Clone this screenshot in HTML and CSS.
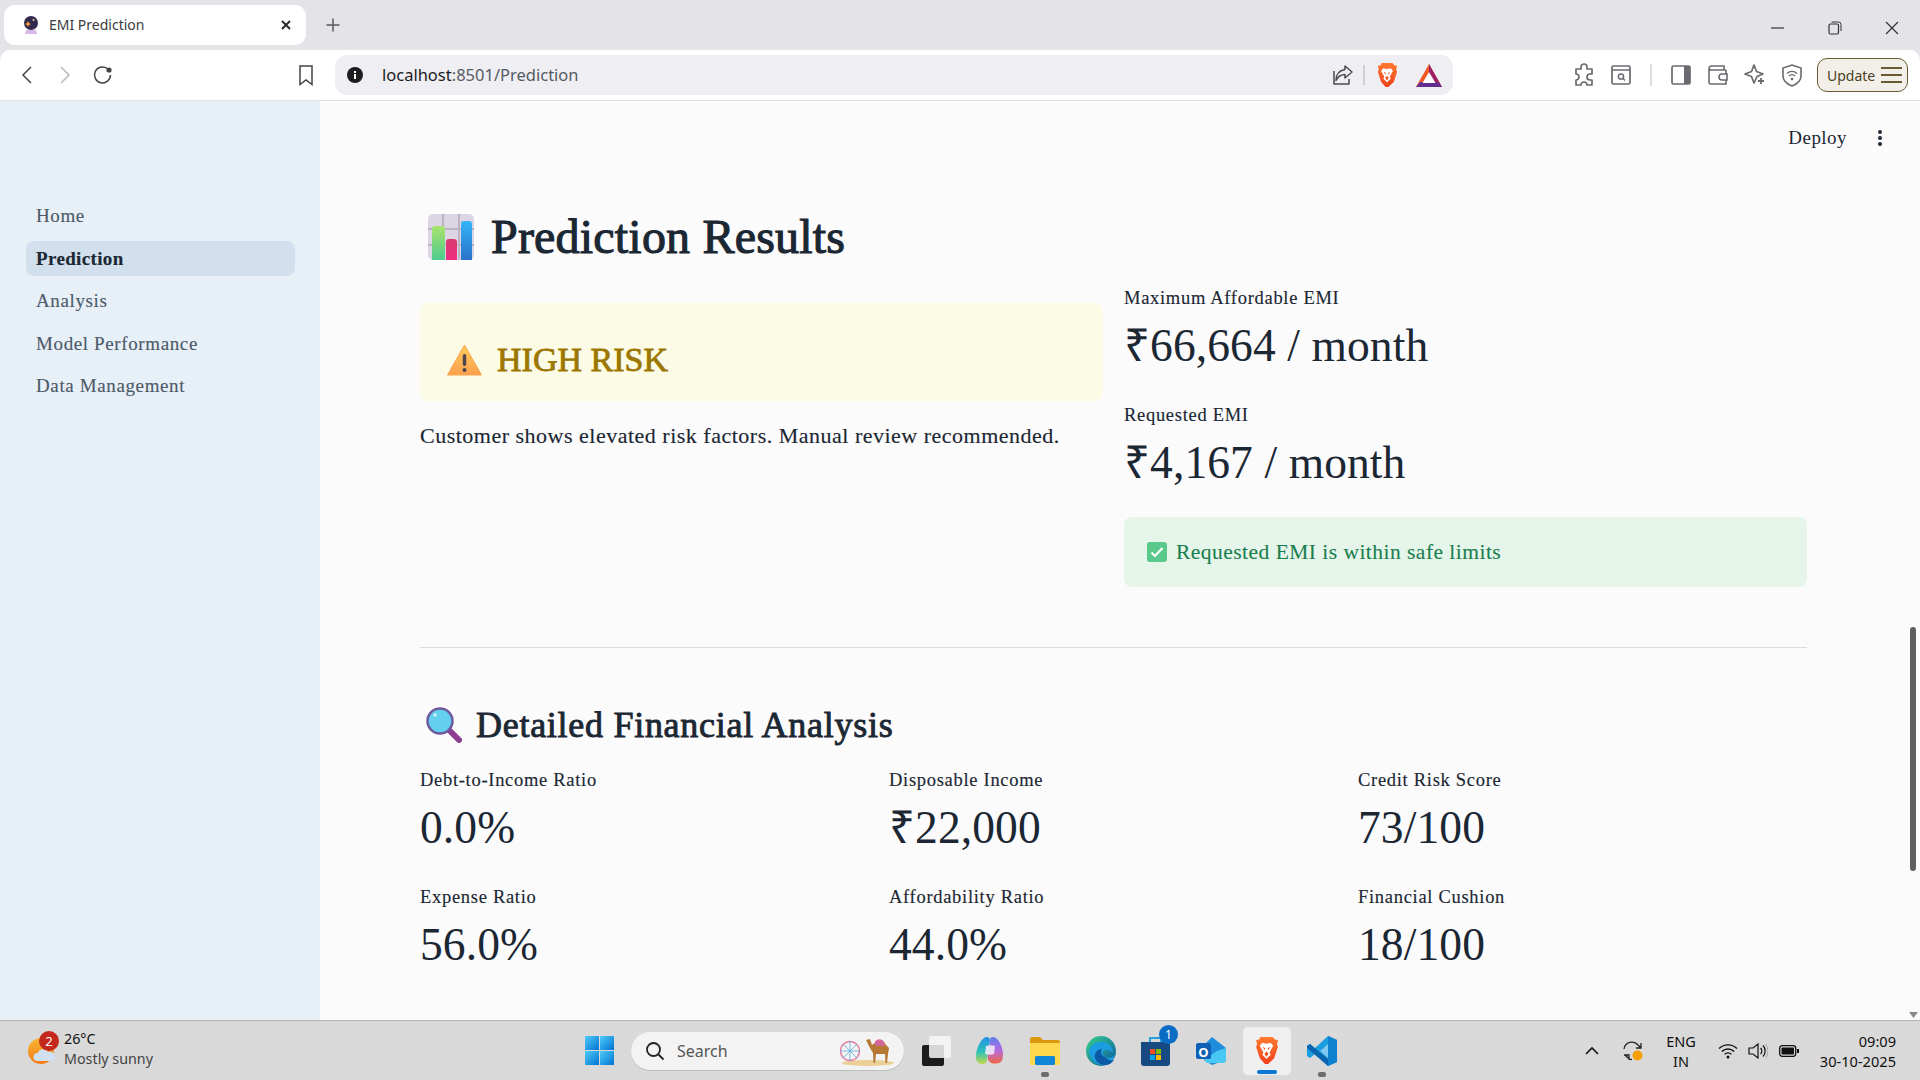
FILE: index.html
```html
<!DOCTYPE html>
<html lang="en">
<head>
<meta charset="utf-8">
<title>EMI Prediction</title>
<link rel="stylesheet" href="styles.css">
</head>
<body>
<svg class="defs" width="0" height="0" aria-hidden="true">
  <defs>
    <linearGradient id="bravegrad" x1="0" y1="0" x2="0" y2="1"><stop offset="0" stop-color="#ff7a2f"/><stop offset="1" stop-color="#f0421c"/></linearGradient>
    <linearGradient id="winblue" x1="0" y1="0" x2="1" y2="1"><stop offset="0" stop-color="#4fcbfb"/><stop offset="1" stop-color="#0272cf"/></linearGradient>
    <linearGradient id="barg" x1="0" y1="0" x2="0" y2="1"><stop offset="0" stop-color="#a8e36a"/><stop offset="1" stop-color="#4ecb8f"/></linearGradient>
    <linearGradient id="barp" x1="0" y1="0" x2="0" y2="1"><stop offset="0" stop-color="#d93a6e"/><stop offset="1" stop-color="#f02d80"/></linearGradient>
    <linearGradient id="barb" x1="0" y1="0" x2="0" y2="1"><stop offset="0" stop-color="#34b4fa"/><stop offset="1" stop-color="#2a72c8"/></linearGradient>
    <linearGradient id="warn" x1="0" y1="0" x2="0" y2="1"><stop offset="0" stop-color="#ffcf5c"/><stop offset="1" stop-color="#fb9f4e"/></linearGradient>
    <linearGradient id="sunny" x1="0" y1="0" x2="0" y2="1"><stop offset="0" stop-color="#f7b733"/><stop offset="1" stop-color="#f47a14"/></linearGradient>
    <linearGradient id="copil" x1="0" y1="0" x2="0" y2="1"><stop offset="0" stop-color="#1f8fe8"/><stop offset=".55" stop-color="#2fc4b8"/><stop offset="1" stop-color="#c5d94a"/></linearGradient>
    <linearGradient id="copir" x1="0" y1="0" x2="0" y2="1"><stop offset="0" stop-color="#5a7df0"/><stop offset=".5" stop-color="#b56ae0"/><stop offset="1" stop-color="#f0683f"/></linearGradient>
    <linearGradient id="edgeg" x1="0" y1="0" x2="1" y2="1"><stop offset="0" stop-color="#37d08a"/><stop offset="1" stop-color="#0c59a4"/></linearGradient>
    <symbol id="brave" viewBox="0 0 24 28">
      <path d="M6 1h12l2 2.4 3 .6-1 4 1 2.500-3.600 11L13.500 27h-3l-4.900-5.500L2 10.500 3 8 2 4l3-.6z" fill="url(#bravegrad)"/>
      <path d="M8 6.500l4 1 4-1 2.500 3-2 3.500-1.500 3 1 2-4 4-4-4 1-2-1.500-3-2-3.500z" fill="#fff"/>
      <path d="M8.500 10.500l2.500 1.500-1 1.500zM15.500 10.500L13 12l1 1.500zM12 15l-2 2 2 3 2-3z" fill="#f0521f"/>
    </symbol>
  </defs>
</svg>

<header class="tabstrip">
  <div class="tab">
    <svg class="favicon" width="16" height="18" viewBox="0 0 16 18"><circle cx="8" cy="7" r="7" fill="#33294f"/><path d="M3 14h10l1 4H2z" fill="#d6b8ea"/><path d="M5 5l1 2 2 1-2 1-1 2-1-2-2-1 2-1z" fill="#f2a33a"/><circle cx="10.500" cy="4" r="1" fill="#f5d9a6"/></svg>
    <span class="tab-title">EMI Prediction</span>
    <svg class="tab-close" width="12" height="12" viewBox="0 0 12 12"><path d="M2 2l8 8M10 2l-8 8" stroke="#2b2b2f" stroke-width="2"/></svg>
  </div>
  <svg class="newtab" width="16" height="16" viewBox="0 0 16 16"><path d="M8 1.500v13M1.500 8h13" stroke="#5b5b60" stroke-width="1.500"/></svg>
  <div class="winctl">
    <span class="winbtn"><svg width="14" height="14" viewBox="0 0 14 14"><path d="M0 7h13" stroke="#333" stroke-width="1.200"/></svg></span>
    <span class="winbtn"><svg width="14" height="14" viewBox="0 0 14 14"><rect x="1" y="3" width="9.500" height="10" rx="1.500" fill="none" stroke="#333" stroke-width="1.200"/><path d="M3.500 1h7a2.500 2.500 0 0 1 2.500 2.500V10" fill="none" stroke="#333" stroke-width="1"/></svg></span>
    <span class="winbtn"><svg width="14" height="14" viewBox="0 0 14 14"><path d="M1 1l12 12M13 1L1 13" stroke="#333" stroke-width="1.200"/></svg></span>
  </div>
</header>

<nav class="toolbar">
  <div class="tb-left">
    <span class="navbtn"><svg width="14" height="20" viewBox="0 0 14 20"><path d="M11 2L3 10l8 8" fill="none" stroke="#444" stroke-width="1.500"/></svg></span>
    <span class="navbtn"><svg width="14" height="20" viewBox="0 0 14 20"><path d="M3 2l8 8-8 8" fill="none" stroke="#b9b9bd" stroke-width="1.500"/></svg></span>
    <span class="navbtn"><svg width="22" height="22" viewBox="0 0 22 22"><path d="M18.500 11A8 8 0 1 1 15 4.300" fill="none" stroke="#444" stroke-width="1.500"/><circle cx="17" cy="6" r="2.600" fill="#444"/></svg></span>
    <span class="bookmark"><svg width="16" height="21" viewBox="0 0 16 21"><path d="M2 1h12v18.500l-6-4.500-6 4.500z" fill="none" stroke="#444" stroke-width="1.500"/></svg></span>
  </div>
  <div class="addr">
    <svg class="info" width="16" height="16" viewBox="0 0 16 16"><circle cx="8" cy="8" r="8" fill="#1d1d20"/><rect x="7" y="7" width="2" height="5" fill="#fff"/><rect x="7" y="4" width="2" height="2" fill="#fff"/></svg>
    <span class="url"><span class="url-host">localhost</span>:8501/Prediction</span>
    <span class="addr-right">
      <svg width="22" height="22" viewBox="0 0 22 22"><path d="M13 2l7 6-7 6v-3.500c-4 0-7 2-9 6 0-6 3-10 9-11zM2 7v13h15v-5" fill="none" stroke="#4c4c50" stroke-width="1.500" stroke-linejoin="round"/></svg>
      <span class="addr-sep"></span>
      <svg class="brave-small" width="22" height="26"><use href="#brave"/></svg>
      <svg class="bat" width="26" height="23" viewBox="0 0 26 23"><path d="M13 0l13 23H0z" fill="#f15a22"/><path d="M13 0l13 23h-7l-6-11z" fill="#9e1f63"/><path d="M0 23h26l-4-5H4z" fill="#662d91"/><path d="M13 8l6.500 11h-13z" fill="#fff"/></svg>
    </span>
  </div>
  <div class="tb-right">
    <span class="tool"><svg width="22" height="24" viewBox="0 0 22 24"><path d="M8 4a3 3 0 0 1 6 0v2h5v5h-2a3 3 0 0 0 0 6h2v5h-5a3 3 0 0 0-6 0H3v-5a3 3 0 0 0 0-6V6h5z" fill="none" stroke="#6a6a70" stroke-width="1.700" stroke-linejoin="round"/></svg></span>
    <span class="tool"><svg width="20" height="20" viewBox="0 0 20 20"><rect x="1" y="1" width="18" height="18" rx="1.500" fill="none" stroke="#6a6a70" stroke-width="1.700"/><path d="M1 5h18" stroke="#6a6a70" stroke-width="1.500"/><circle cx="10" cy="11.500" r="2.600" fill="none" stroke="#6a6a70" stroke-width="1.500"/><path d="M12 13.500l2 2" stroke="#6a6a70" stroke-width="1.500"/></svg></span>
    <span class="tool-sep"><span class="tool-rule"></span></span>
    <span class="tool"><svg width="20" height="20" viewBox="0 0 20 20"><rect x="1" y="1" width="18" height="18" rx="1.500" fill="none" stroke="#6a6a70" stroke-width="1.700"/><rect x="13" y="1" width="6" height="18" fill="#6a6a70"/></svg></span>
    <span class="tool"><svg width="20" height="20" viewBox="0 0 20 20"><path d="M18 5H3.500A2.500 2.500 0 0 1 1 3.500 2.500 2.500 0 0 1 3.500 1H16v4M1 3.500V17a2 2 0 0 0 2 2h15V5" fill="none" stroke="#6a6a70" stroke-width="1.600"/><path d="M19 9h-5a2.500 2.500 0 0 0 0 6h5z" fill="#fff" stroke="#6a6a70" stroke-width="1.600"/></svg></span>
    <span class="tool"><svg width="22" height="24" viewBox="0 0 22 24"><path d="M10 2l2.500 6.500L19 11l-6 2.500L10 20l-2.500-6.500L1 11l6.500-2.500z" fill="none" stroke="#6a6a70" stroke-width="1.700" stroke-linejoin="round"/><path d="M17 15v6M14 18h6" stroke="#6a6a70" stroke-width="1.800"/></svg></span>
    <span class="tool"><svg width="20" height="23" viewBox="0 0 20 23"><path d="M10 1l9 3v8c0 5-4 8-9 10-5-2-9-5-9-10V4z" fill="none" stroke="#6a6a70" stroke-width="1.600"/><path d="M5 9.500a7 7 0 0 1 10 0M7 12a4 4 0 0 1 6 0" fill="none" stroke="#6a6a70" stroke-width="1.400"/><circle cx="10" cy="15" r="1.300" fill="#6a6a70"/></svg></span>
    <span class="update"><span class="update-text">Update</span><span class="burger"><i></i><i></i><i></i></span></span>
  </div>
</nav>

<div class="page">
  <aside class="sidebar">
    <a class="nav-item">Home</a>
    <a class="nav-item active">Prediction</a>
    <a class="nav-item">Analysis</a>
    <a class="nav-item">Model Performance</a>
    <a class="nav-item">Data Management</a>
  </aside>

  <main class="main">
    <div class="deploy">
      <span class="deploy-text">Deploy</span>
      <svg width="4" height="16" viewBox="0 0 4 16"><circle cx="2" cy="2" r="2" fill="#1f2937"/><circle cx="2" cy="8" r="2" fill="#1f2937"/><circle cx="2" cy="14" r="2" fill="#1f2937"/></svg>
    </div>

    <h1 class="title">
      <svg class="title-emoji" width="46" height="46" viewBox="0 0 46 46"><rect width="46" height="46" rx="5" fill="#dcd6e4"/><path d="M15 0v46M31 0v46M0 15h46M0 31h46" stroke="#b9b3c3" stroke-width="2"/><path d="M4 15a3 3 0 0 1 3-3h7a3 3 0 0 1 3 3v31H4z" fill="url(#barg)"/><path d="M18 28a3 3 0 0 1 3-3h5a3 3 0 0 1 3 3v18H18z" fill="url(#barp)"/><path d="M33 10a3 3 0 0 1 3-3h5a3 3 0 0 1 3 3v36H33z" fill="url(#barb)"/></svg>
      <span>Prediction Results</span>
    </h1>

    <section class="results">
      <div class="risk-col">
        <div class="risk-box">
          <svg width="35" height="32" viewBox="0 0 35 32"><path d="M17.500 1L34.500 31H.5z" fill="url(#warn)" stroke="#f9a24f" stroke-linejoin="round"/><rect x="15.800" y="10" width="3.400" height="12" rx="1.700" fill="#4b4650"/><circle cx="17.500" cy="26" r="2" fill="#4b4650"/></svg>
          <span class="risk-text">HIGH RISK</span>
        </div>
        <p class="risk-note">Customer shows elevated risk factors. Manual review recommended.</p>
      </div>
      <div class="emi-col">
        <div class="metric"><div class="metric-label">Maximum Affordable EMI</div><div class="metric-value">₹66,664 / month</div></div>
        <div class="metric"><div class="metric-label">Requested EMI</div><div class="metric-value">₹4,167 / month</div></div>
        <div class="ok-box">
          <svg width="20" height="20" viewBox="0 0 20 20"><rect width="20" height="20" rx="3" fill="#58c98a"/><path d="M4.500 10.500l3.500 3.500 7.500-8" fill="none" stroke="#fff" stroke-width="2.200"/></svg>
          <span>Requested EMI is within safe limits</span>
        </div>
      </div>
    </section>

    <hr class="rule">

    <h2 class="subtitle">
      <svg width="36" height="36" viewBox="0 0 36 36"><path d="M23 23l10 10" stroke="#8c3f90" stroke-width="6" stroke-linecap="round"/><circle cx="14" cy="14" r="12.500" fill="#62d0ee" stroke="#6d5a9c" stroke-width="2.500"/><circle cx="9" cy="8" r="1.800" fill="#c8f2fb"/></svg>
      <span>Detailed Financial Analysis</span>
    </h2>

    <section class="metrics-grid">
      <div class="metric"><div class="metric-label">Debt-to-Income Ratio</div><div class="metric-value">0.0%</div></div>
      <div class="metric"><div class="metric-label">Disposable Income</div><div class="metric-value">₹22,000</div></div>
      <div class="metric"><div class="metric-label">Credit Risk Score</div><div class="metric-value">73/100</div></div>
      <div class="metric"><div class="metric-label">Expense Ratio</div><div class="metric-value">56.0%</div></div>
      <div class="metric"><div class="metric-label">Affordability Ratio</div><div class="metric-value">44.0%</div></div>
      <div class="metric"><div class="metric-label">Financial Cushion</div><div class="metric-value">18/100</div></div>
    </section>

    <div class="scroll-thumb"></div>
    <svg class="scroll-arrow" width="9" height="6" viewBox="0 0 9 6"><path d="M0 0h9L4.500 6z" fill="#8a8a8a"/></svg>
  </main>
</div>

<footer class="taskbar">
  <div class="weather">
    <span class="weather-icon">
      <svg width="30" height="34" viewBox="0 0 30 34"><circle cx="15" cy="17" r="13" fill="url(#sunny)"/><path d="M11 27a4 4 0 0 1 1-8 5.500 5.500 0 0 1 10-1 4.500 4.500 0 0 1 4 9z" fill="#cfe0f3"/></svg>
      <span class="weather-badge">2</span>
    </span>
    <span class="weather-text"><span class="temp">26°C</span><span class="cond">Mostly sunny</span></span>
  </div>
  <div class="tb-center">
    <span class="slot"><svg width="29" height="29" viewBox="0 0 29 29"><rect width="14" height="14" fill="url(#winblue)"/><rect x="15" width="14" height="14" fill="url(#winblue)"/><rect y="15" width="14" height="14" fill="url(#winblue)"/><rect x="15" y="15" width="14" height="14" fill="url(#winblue)"/></svg></span>
    <span class="search">
      <svg width="20" height="20" viewBox="0 0 20 20"><circle cx="8.500" cy="8.500" r="6.500" fill="none" stroke="#222" stroke-width="1.800"/><path d="M13 13l5.500 5.500" stroke="#222" stroke-width="1.800"/></svg>
      <span class="search-text">Search</span>
      <svg class="camel" width="54" height="30" viewBox="0 0 54 30"><ellipse cx="28" cy="27" rx="26" ry="3" fill="#eccf96"/><circle cx="10" cy="15" r="9.500" fill="none" stroke="#e77fa4" stroke-width="1.500"/><path d="M10 5v20M0 15h20M3 8l14 14M17 8L3 22" stroke="#5ba9dd" stroke-width=".8"/><path d="M26 4l4-1 2 6 5-4 6 0 4 5 2 2-1 6-1 9h-1.500l-.5-9h-9l-1 9h-1.500l-.5-10-3-5z" fill="#b57734"/><path d="M35 5.500c3-3 7-3 9 .5l1 4h-10z" fill="#d2689a"/></svg>
    </span>
    <span class="slot slot-task"><svg width="30" height="30" viewBox="0 0 30 30"><rect x="0" y="9" width="22" height="21" rx="2" fill="#1c1c1c"/><rect x="7" y="0" width="22" height="22" rx="2" fill="#f7f7f7" fill-opacity=".85"/></svg></span>
    <span class="slot"><svg width="30" height="30" viewBox="0 0 30 30"><path d="M9 2c2-2 6-1 6 2l-3 20c-.5 3-3 5-6 4-4-1-6-5-5-10C2 12 5 5 9 2z" fill="url(#copil)"/><path d="M18 1c4 0 7 5 9 11 2 7 1 14-3 15-4 1-8 1-10-2-2-2-1-6 0-10l1-11c0-2 1-3 3-3z" fill="url(#copir)"/><path d="M11 10c3-1 6-1 9 0l-1 8c-3 1-6 1-9 0z" fill="#f4eefb" fill-opacity=".85"/></svg></span>
    <span class="slot with-dot"><svg width="30" height="28" viewBox="0 0 30 28"><path d="M0 2a2 2 0 0 1 2-2h8l3 3h15a2 2 0 0 1 2 2v4H0z" fill="#d99a10"/><path d="M0 6h30v22H0z" fill="#ffd84d"/><rect x="5" y="19" width="20" height="9" rx="1.500" fill="#1186d6"/></svg><i class="dot"></i></span>
    <span class="slot"><svg width="30" height="30" viewBox="0 0 30 30"><circle cx="15" cy="15" r="15" fill="url(#edgeg)"/><path d="M30 17c-2 5-8 6-11 4-3-2-3-6 0-7 3-1 6 1 8 3 0-6-5-11-12-11C8 6 4 10 3 15c1 8 7 14 14 14 6 0 11-5 13-12z" fill="#1b9de2"/><path d="M19 21c-4-1-5-5-3-8-5 0-8 4-7 9 1 4 5 7 10 7 4 0 7-2 9-5-3 1-6 0-9-3z" fill="#0c59a4"/></svg></span>
    <span class="slot badged"><svg width="29" height="30" viewBox="0 0 29 30"><path d="M9 6V2h11v4" fill="none" stroke="#27a0e0" stroke-width="2"/><path d="M0 6h29v21a3 3 0 0 1-3 3H3a3 3 0 0 1-3-3z" fill="#174a80"/><rect x="9" y="13" width="5" height="5" fill="#f25022"/><rect x="15" y="13" width="5" height="5" fill="#7fba00"/><rect x="9" y="19" width="5" height="5" fill="#00a4ef"/><rect x="15" y="19" width="5" height="5" fill="#ffb900"/></svg><span class="store-badge">1</span></span>
    <span class="slot"><svg width="30" height="28" viewBox="0 0 30 28"><path d="M16 0l14 11v12l-14 5-8-5V8z" fill="#1f8ddb"/><path d="M30 11v12a3 3 0 0 1-3 3H11l-3-3 13-9z" fill="#48c8f3"/><rect x="0" y="6" width="15" height="16" rx="2" fill="#0f5fb5"/><text class="outlook-o" x="7.500" y="19.500" text-anchor="middle">O</text></svg></span>
    <span class="slot active-app"><svg width="25" height="31"><use href="#brave"/></svg><i class="bar"></i></span>
    <span class="slot with-dot"><svg width="30" height="30" viewBox="0 0 30 30"><path d="M21 0l9 4v22l-9 4L8 18l-5 4-3-2v-10l3-2 5 4z" fill="#1b9de2"/><path d="M21 0l9 4v22l-9 4z" fill="#0f7fcf"/><path d="M21 8l-8 7 8 7z" fill="#e4f3fb" fill-opacity=".5"/><path d="M0 10l3-2 18 15v7L0 12z" fill="#0a66b0"/></svg><i class="dot"></i></span>
  </div>
  <div class="tray">
    <svg class="tray-caret" width="14" height="9" viewBox="0 0 14 9"><path d="M1 8l6-6 6 6" fill="none" stroke="#111" stroke-width="1.600"/></svg>
    <svg class="tray-sync" width="22" height="22" viewBox="0 0 22 22"><path d="M2 9a8 8 0 0 1 14-4l3 3M19 3v5h-5M2 15h5v5M3 15l2 2a7 7 0 0 0 5 2.500" fill="none" stroke="#222" stroke-width="1.300"/><circle cx="15.500" cy="15.500" r="5" fill="#f5a000"/></svg>
    <span class="lang"><span>ENG</span><span>IN</span></span>
    <svg class="tray-wifi" width="20" height="16" viewBox="0 0 20 16"><path d="M1 5.500a13 13 0 0 1 18 0M3.800 8.500a9 9 0 0 1 12.400 0M6.600 11.300a5 5 0 0 1 6.800 0" fill="none" stroke="#111" stroke-width="1.400"/><circle cx="10" cy="14" r="1.500" fill="#111"/></svg>
    <svg class="tray-vol" width="20" height="16" viewBox="0 0 20 16"><path d="M1 5h4l5-4v14l-5-4H1z" fill="none" stroke="#111" stroke-width="1.200"/><path d="M12.500 5a4 4 0 0 1 0 6" fill="none" stroke="#111" stroke-width="1.200"/><path d="M15 2.500a8 8 0 0 1 0 11" fill="none" stroke="#111" stroke-width="1.200"/><path d="M17.500 1a11 11 0 0 1 0 14" fill="none" stroke="#aaa" stroke-width="1"/></svg>
    <svg class="tray-batt" width="20" height="12" viewBox="0 0 20 12"><rect x=".7" y=".7" width="16" height="10.600" rx="2.500" fill="none" stroke="#111" stroke-width="1.300"/><rect x="2.500" y="2.500" width="12.500" height="7" rx="1" fill="#111"/><rect x="18" y="4" width="2" height="4" fill="#111"/></svg>
    <span class="clock"><span>09:09</span><span>30-10-2025</span></span>
  </div>
</footer>
</body>
</html>
```

FILE: styles.css
```css
* { box-sizing: border-box; }
html, body { margin: 0; padding: 0; height: 100%; }
body {
  width: 1920px; height: 1080px; overflow: hidden;
  display: flex; flex-direction: column;
  background: #e3e3e8;
  font-family: "Liberation Serif", serif;
  color: #1b2733;
}
.defs { position: absolute; }

/* tab strip */
.tabstrip { height: 50px; flex: none; display: flex; align-items: flex-start; padding: 5px 0 0 4px; font-family: "Noto Sans", sans-serif; }
.tab { width: 302px; height: 40px; background: #fff; border-radius: 11px; display: flex; align-items: center; padding: 0 14px 0 19px; }
.favicon { flex: none; }
.tab-title { margin: -2px 0 0 10px; font-size: 14px; color: #3b3b40; flex: 1; }
.newtab { margin: 12px 0 0 19px; }
.winctl { margin-left: auto; display: flex; padding-top: 16px; }
.winbtn { width: 57px; display: flex; justify-content: center; }

/* toolbar */
.toolbar { height: 51px; flex: none; display: flex; align-items: flex-start; padding-top: 5px; background: #fff; border-radius: 10px 10px 0 0; border-bottom: 1px solid #e2e2e8; font-family: "Noto Sans", sans-serif; }
.tb-left { width: 335px; height: 40px; flex: none; display: flex; align-items: center; padding: 0 21px 0 8px; }
.navbtn { width: 38px; display: flex; justify-content: center; }
.bookmark { margin-left: auto; display: flex; }
.addr { width: 1118px; height: 40px; flex: none; background: #efeff3; border-radius: 12px; display: flex; align-items: center; padding: 0 11px 0 12px; }
.info { flex: none; }
.url { margin: -2px 0 0 19px; font-size: 16.500px; color: #555b63; }
.url-host { color: #1c1c1f; }
.addr-right { margin-left: auto; display: flex; align-items: center; }
.addr-sep { width: 2px; height: 20px; background: #cfcfd4; margin: 0 11px 0 9px; }
.brave-small { margin-right: 18px; }
.tb-right { flex: 1; height: 40px; display: flex; align-items: center; padding-left: 112px; }
.tool { width: 37px; display: flex; justify-content: center; }
.tool-sep { width: 23px; display: flex; justify-content: center; }
.tool-rule { width: 2px; height: 22px; background: #dedee2; }
.update { margin-left: 7px; width: 91px; height: 34px; flex: none; border: 1.500px solid #6b5a30; border-radius: 10px; background: #f2efe9; display: flex; align-items: center; padding: 0 5px 0 9px; justify-content: space-between; }
.update-text { font-size: 14px; color: #4b3f1d; }
.burger { display: flex; flex-direction: column; gap: 5px; width: 21px; }
.burger i { display: block; height: 2px; background: #6b5a30; }

/* page */
.page { height: 919px; flex: none; display: flex; background: #fbfbfc; }
.sidebar { width: 320px; flex: none; background: #e8f0f7; padding: 97px 25px 0 26px; display: flex; flex-direction: column; gap: 7.500px; }
.nav-item { height: 35px; line-height: 35px; padding-left: 10px; border-radius: 8px; font-size: 19px; color: #4d5a6a; letter-spacing: .62px; -webkit-text-stroke: .15px; }
.nav-item.active { background: #d2dfec; color: #1b2733; font-weight: 700; letter-spacing: .35px; }

.main { position: relative; flex: 1; min-width: 0; padding: 111px 113px 0 100px; }
.deploy { position: absolute; top: 26px; right: 38px; display: flex; align-items: center; gap: 31px; }
.deploy-text { font-size: 19px; letter-spacing: .45px; }

.title { margin: 0; height: 50px; display: flex; align-items: center; gap: 17px; font-size: 48px; font-weight: 400; line-height: 50px; padding-left: 8px; letter-spacing: .2px; -webkit-text-stroke: 1.100px; }
.title-emoji { flex: none; }
.results { margin-top: 24px; display: grid; grid-template-columns: 683px 683px; column-gap: 21px; }
.risk-col { padding-top: 17px; }
.risk-box { height: 98px; background: #fcfce6; border-radius: 8px; display: flex; align-items: center; gap: 15px; padding: 15px 0 0 27px; }
.risk-text { font-size: 34px; font-weight: 400; color: #9c7700; -webkit-text-stroke: .8px; }
.risk-note { margin: 23px 0 0; font-size: 22px; line-height: 24px; letter-spacing: .5px; -webkit-text-stroke: .15px; }
.emi-col { display: flex; flex-direction: column; gap: 23px; }
.metric-label { height: 24px; line-height: 24px; font-size: 18.500px; letter-spacing: .7px; -webkit-text-stroke: .15px; }
.metric-value { height: 70px; line-height: 72px; font-size: 45.500px; letter-spacing: .1px; }
.ok-box { height: 70px; margin-top: -3px; background: #e5f5ea; border-radius: 8px; display: flex; align-items: center; gap: 9px; padding-left: 23px; font-size: 21.500px; color: #1a7f4f; letter-spacing: .47px; -webkit-text-stroke: .12px; }
.rule { margin: 60px 0 0; border: 0; border-top: 1px solid #d9dce0; }
.subtitle { margin: 55px 0 0; height: 44px; display: flex; align-items: center; gap: 14px; font-size: 36px; font-weight: 400; padding-left: 6px; letter-spacing: .72px; -webkit-text-stroke: .9px; }
.metrics-grid { margin-top: 21px; display: grid; grid-template-columns: 469px 469px 1fr; row-gap: 23px; }
.scroll-thumb { position: absolute; left: 1590px; top: 526px; width: 6px; height: 244px; border-radius: 3px; background: #5f5f5f; }
.scroll-arrow { position: absolute; left: 1589px; top: 911px; }

/* taskbar */
.taskbar { height: 60px; flex: none; background: #d9d9d9; border-top: 1px solid #b2b2b2; display: grid; grid-template-columns: 575px 1fr auto; align-items: center; font-family: "Noto Sans", sans-serif; color: #111; }
.weather { display: flex; align-items: center; padding-left: 26px; gap: 9px; }
.weather-icon { position: relative; width: 29px; height: 34px; display: block; }
.weather-badge { position: absolute; left: 13px; top: -3px; width: 20px; height: 20px; border-radius: 50%; background: #c4281c; color: #fff; font-size: 13px; line-height: 20px; text-align: center; }
.weather-text { display: flex; flex-direction: column; font-size: 14.300px; line-height: 20px; margin-top: -4px; }
.cond { color: #444; }
.tb-center { display: flex; align-items: center; gap: 7.300px; }
.slot { position: relative; width: 48px; height: 48px; flex: none; display: flex; align-items: center; justify-content: center; }
.slot-task { padding-left: 4px; }
.search { width: 273px; height: 38px; flex: none; margin-left: .7px; margin-right: -.5px; background: #f3f3f3; border-radius: 19px; box-shadow: 0 1px 0 #bdbdbd; display: flex; align-items: center; padding: 0 10px 0 14px; }
.search-text { margin-left: 12px; font-size: 16px; color: #555; flex: 1; }
.dot { position: absolute; bottom: -2px; left: 20px; width: 8px; height: 5px; border-radius: 2px; background: #6d6d6d; }
.active-app { background: #efefef; border-radius: 5px; }
.bar { position: absolute; bottom: 1px; left: 14px; width: 20px; height: 4px; border-radius: 2px; background: #0a78d4; }
.store-badge { position: absolute; right: 2px; top: -2px; width: 19px; height: 19px; border-radius: 50%; background: #0a6cc4; color: #fff; font-size: 12px; line-height: 19px; text-align: center; }
.outlook-o { font-family: "Noto Sans", sans-serif; font-size: 13px; font-weight: 700; fill: #fff; }
.tray { display: flex; align-items: center; padding-right: 24px; }
.tray-caret { margin-right: 23px; }
.tray-sync { margin-right: 22px; }
.lang { display: flex; flex-direction: column; align-items: center; font-size: 14.500px; line-height: 20px; margin-right: 22px; }
.tray-wifi { margin-right: 10px; }
.tray-vol { margin-right: 11px; }
.tray-batt { margin-right: 21px; }
.clock { display: flex; flex-direction: column; align-items: flex-end; font-size: 14.600px; line-height: 20px; }
```
